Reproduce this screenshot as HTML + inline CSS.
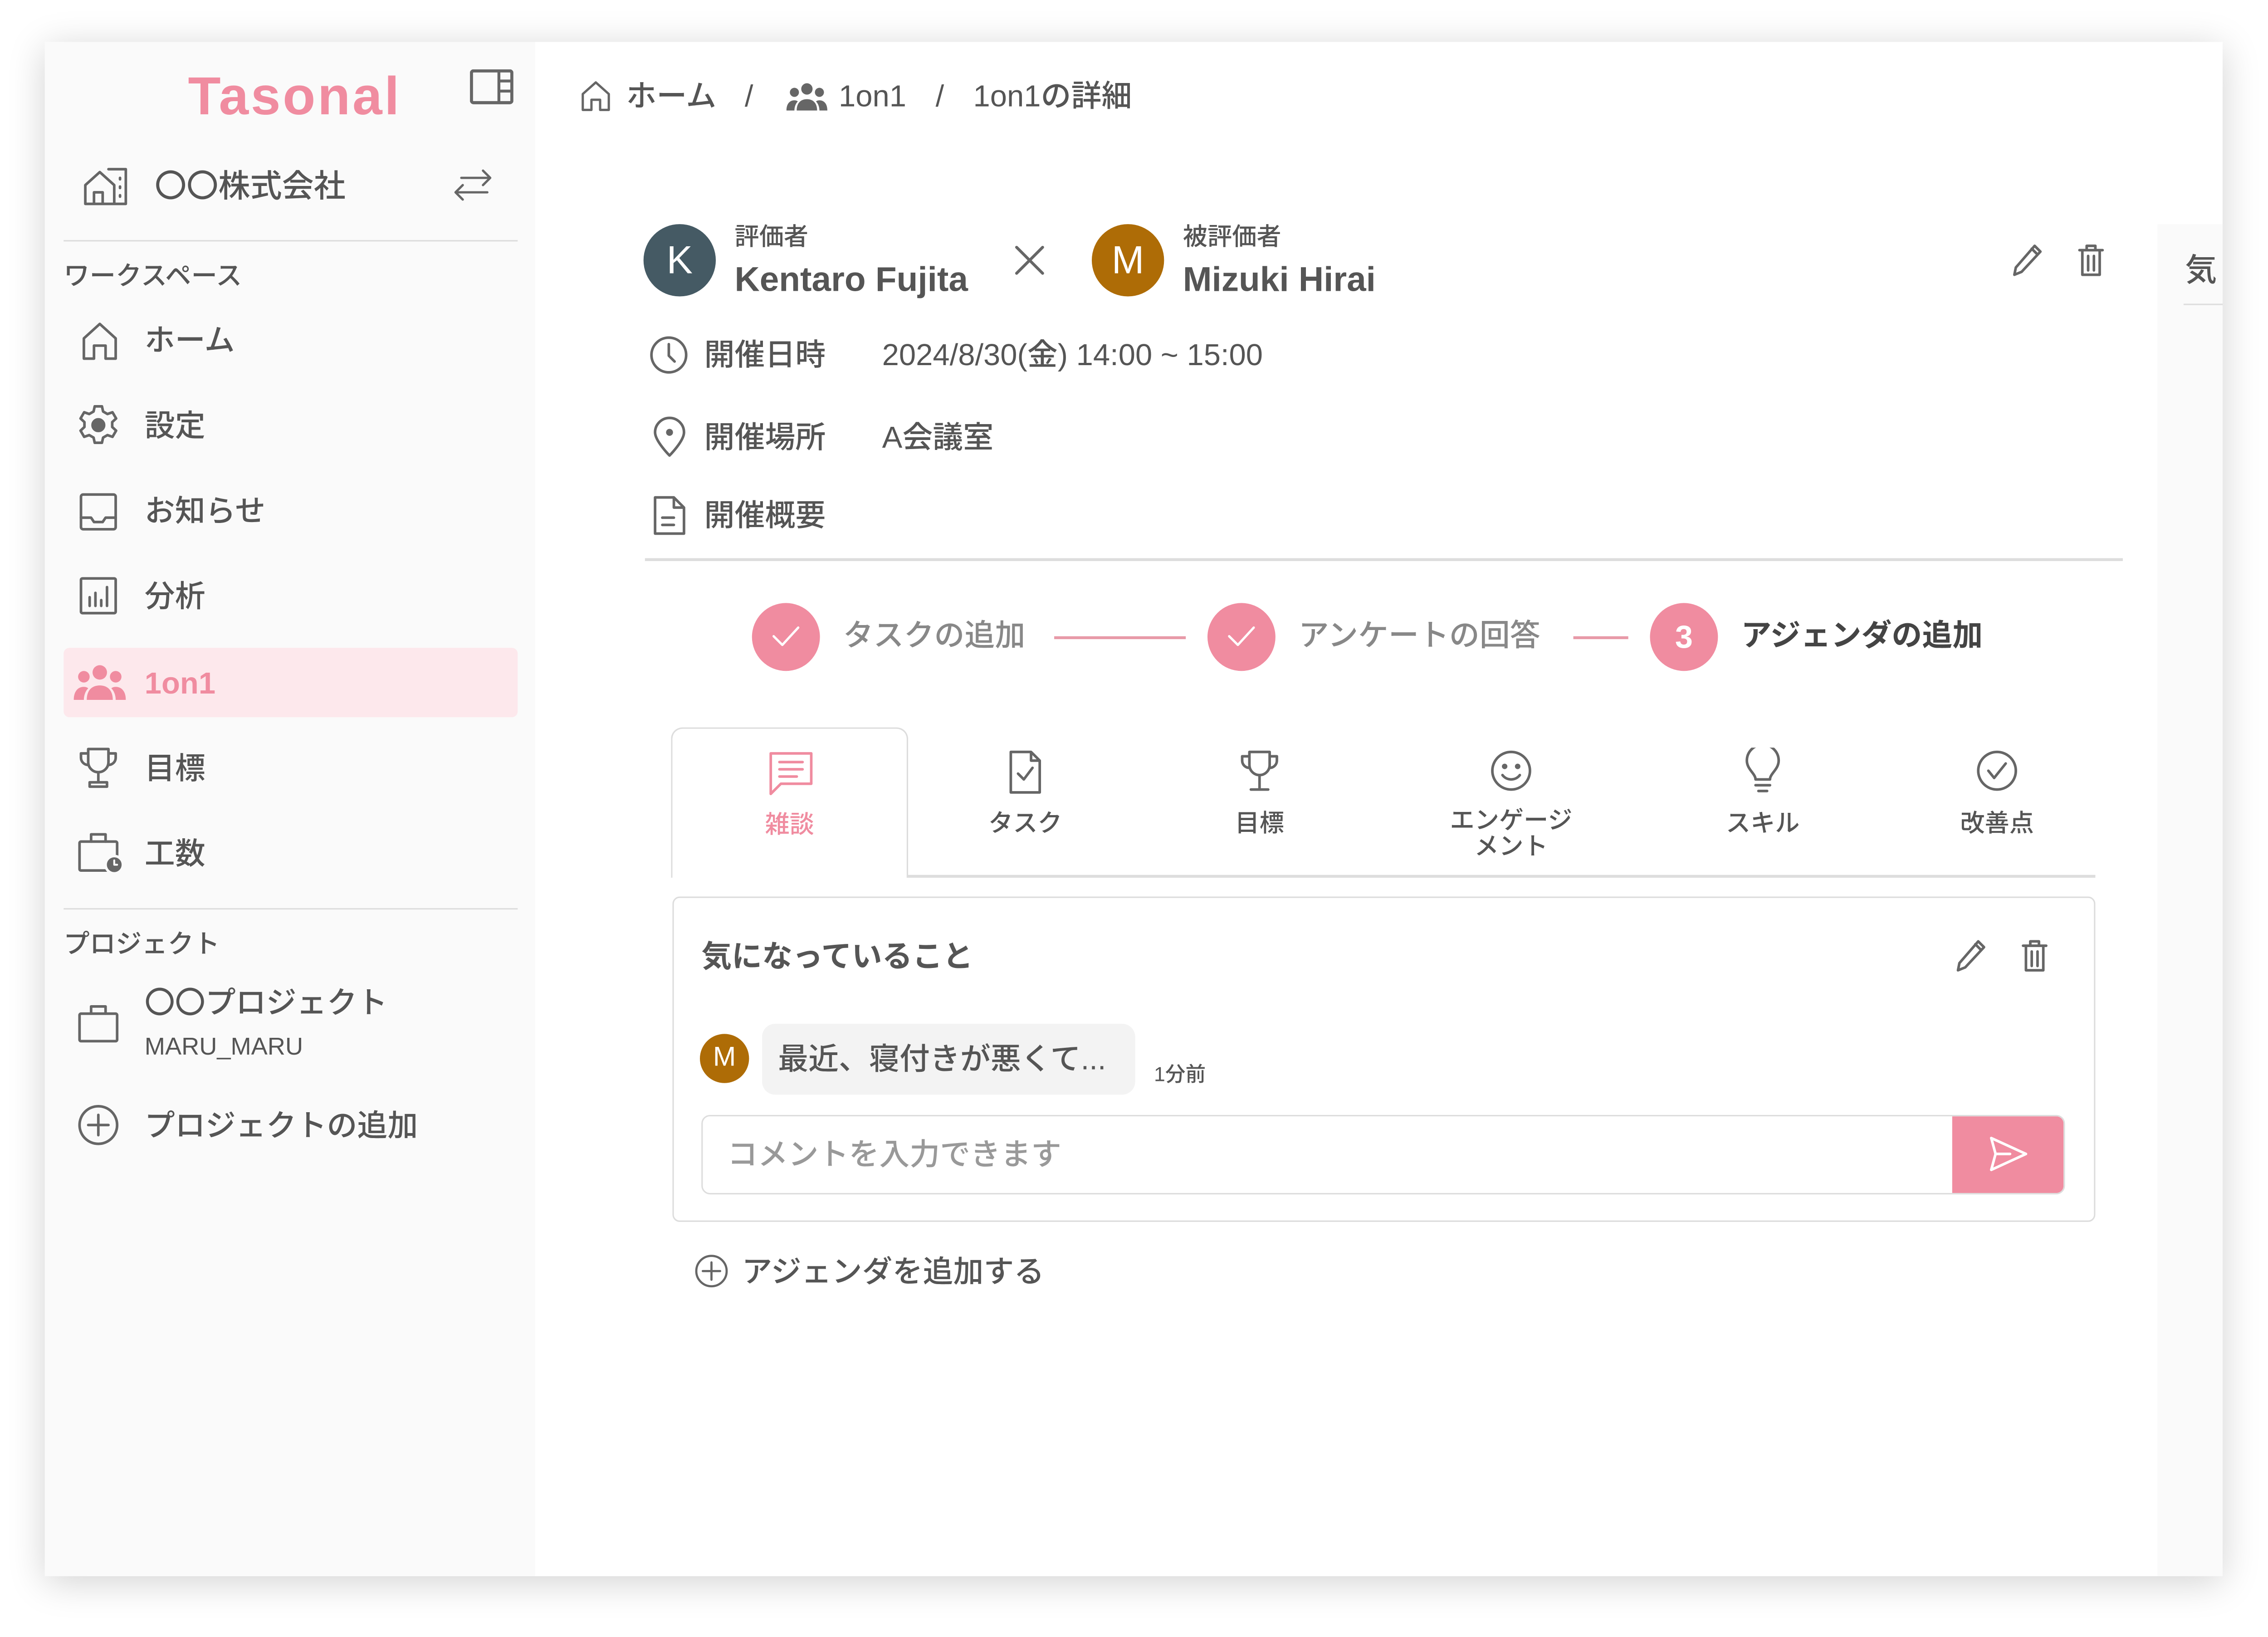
<!DOCTYPE html>
<html><head><meta charset="utf-8"><style>
*{margin:0;padding:0;box-sizing:border-box}
html,body{width:5032px;height:3608px;overflow:hidden;background:#fff}
#s{position:absolute;left:0;top:0;width:1580px;height:1132px;transform:scale(3.188);transform-origin:0 0;font-family:"Liberation Sans","Noto Sans CJK JP",sans-serif;color:#555}
.a{position:absolute;white-space:nowrap}
.win{position:absolute;left:31px;top:29px;width:1506px;height:1061px;background:#fff;box-shadow:0 4px 24px rgba(0,0,0,.18)}
.side{position:absolute;left:31px;top:29px;width:339px;height:1061px;background:#fafafa}
.t{font-size:21px;line-height:1;transform:translateY(-45%);font-weight:500}
svg.i{position:absolute;fill:none;stroke:#666;stroke-width:1.8;stroke-linecap:round;stroke-linejoin:round}
.c{position:absolute;border-radius:50%;color:#fff;text-align:center}
.tl{font-size:17px;transform:translate(-50%,-45%);text-align:center;line-height:1.05;color:#555;font-weight:500}
</style></head><body><div id="s">
<div class="win"></div>
<div class="side"></div>
<div class="a" style="left:1492px;top:155px;width:45px;height:935px;background:#fafafa"></div>
<div class="a t" style="left:1511px;top:186px;font-size:22px">気</div>
<div class="a" style="left:1510px;top:210px;width:27px;height:1px;background:#ddd"></div>

<div class="a" style="left:130px;top:67px;transform:translateY(-50%);font-size:37px;font-weight:bold;color:#f08ca0;letter-spacing:1.5px;font-family:'Liberation Sans',sans-serif">Tasonal</div>
<svg class="i" style="left:325px;top:48px" width="30" height="26" viewBox="0 0 30 26"><rect x="1" y="1" width="28" height="22" rx="1.5" stroke-width="2.2"/><path d="M20 1v22M20 8h9M20 15h9" stroke-width="2"/></svg>

<svg class="i" style="left:57px;top:114px" width="34" height="28" viewBox="0 0 34 28"><path d="M2 27V14l10-9 10 9v13M8 27v-8h6v8M18 3h12v24H2M26 9v1M26 15v1M26 21v1"/></svg>
<div class="a t" style="left:107px;top:128px;font-size:22px;color:#555">〇〇株式会社</div>
<svg class="i" style="left:311px;top:115px" width="32" height="26" viewBox="0 0 32 26"><path d="M4 18h22M4 18l5-5M4 18l5 5M28 8H8M28 8l-5-5M28 8l-5 5" stroke-width="1.6"/></svg>
<div class="a" style="left:44px;top:166px;width:314px;height:1px;background:#ddd"></div>
<div class="a t" style="left:44px;top:190px;font-size:18px">ワークスペース</div>

<svg class="i" style="left:55px;top:222px" width="28" height="28" viewBox="0 0 28 28"><path d="M3 26V12L14 2l11 10v14h-7v-9h-8v9z"/></svg>
<div class="a t" style="left:100px;top:235px">ホーム</div>
<svg class="i" style="left:53px;top:279px" width="30" height="30" viewBox="0 0 30 30"><path d="M12.5 2h5l.8 3.6 3 1.7 3.5-1.2 2.5 4.3-2.7 2.5v3.4l2.7 2.5-2.5 4.3-3.5-1.2-3 1.7-.8 3.6h-5l-.8-3.6-3-1.7-3.5 1.2-2.5-4.3 2.7-2.5v-3.4L2.7 10.4l2.5-4.3 3.5 1.2 3-1.7z"/><circle cx="15" cy="15" r="4" fill="#666"/></svg>
<div class="a t" style="left:100px;top:294px">設定</div>
<svg class="i" style="left:54px;top:340px" width="28" height="28" viewBox="0 0 28 28"><rect x="2" y="2" width="24" height="24" rx="1.5"/><path d="M2 18h7l2 3h6l2-3h7"/></svg>
<div class="a t" style="left:100px;top:353px">お知らせ</div>
<svg class="i" style="left:54px;top:398px" width="28" height="28" viewBox="0 0 28 28"><rect x="2" y="2" width="24" height="24" rx="1"/><path d="M8 21v-6M12 21v-9M16 21v-4M20 21V8"/></svg>
<div class="a t" style="left:100px;top:412px">分析</div>

<div class="a" style="left:44px;top:448px;width:314px;height:48px;background:#fde8ec;border-radius:4px"></div>
<svg class="a" style="left:51px;top:458px" width="36" height="28" viewBox="0 0 36 28" fill="#f08ca0"><circle cx="18" cy="7" r="5"/><circle cx="7" cy="10" r="4"/><circle cx="29" cy="10" r="4"/><path d="M9 26c0-7 4-10 9-10s9 3 9 10zM0 26c0-6 3-9 7-9 2 0 3 1 3 1-2 2-3 5-3 8zM36 26c0-6-3-9-7-9-2 0-3 1-3 1 2 2 3 5 3 8z"/></svg>
<div class="a t" style="left:100px;top:472px;color:#f08ca0;font-weight:bold">1on1</div>

<svg class="i" style="left:54px;top:516px" width="28" height="30" viewBox="0 0 28 30"><path d="M7 2h14v9a7 7 0 0 1-14 0zM7 5H2v3a5 5 0 0 0 5 5M21 5h5v3a5 5 0 0 1-5 5M14 18v7M8 28h12v-3H8z"/></svg>
<div class="a t" style="left:100px;top:531px">目標</div>
<svg class="i" style="left:53px;top:574px" width="34" height="32" viewBox="0 0 34 32"><rect x="2" y="8" width="26" height="20" rx="1"/><path d="M10 8V3h10v5"/><circle cx="26" cy="24" r="6" fill="#666" stroke="#fafafa"/><path d="M26 21v3h2" stroke="#fff" stroke-width="1.3"/></svg>
<div class="a t" style="left:100px;top:590px">工数</div>
<div class="a" style="left:44px;top:628px;width:314px;height:1px;background:#ddd"></div>
<div class="a t" style="left:44px;top:652px;font-size:18px">プロジェクト</div>
<svg class="i" style="left:53px;top:694px" width="30" height="28" viewBox="0 0 30 28"><rect x="2" y="7" width="26" height="19" rx="1"/><path d="M10 7V2h10v5"/></svg>
<div class="a t" style="left:100px;top:693px">〇〇プロジェクト</div>
<div class="a t" style="left:100px;top:723px;font-size:17px">MARU_MARU</div>
<svg class="i" style="left:53px;top:763px" width="30" height="30" viewBox="0 0 30 30"><circle cx="15" cy="15" r="13"/><path d="M15 8v14M8 15h14"/></svg>
<div class="a t" style="left:100px;top:778px">プロジェクトの追加</div>

<svg class="i" style="left:401px;top:55px" width="22" height="22" viewBox="0 0 22 22"><path d="M2 21V10l9-8 9 8v11h-6v-7H8v7z" stroke-width="1.6"/></svg>
<div class="a t" style="left:433px;top:66px">ホーム</div>
<div class="a t" style="left:515px;top:66px">/</div>
<svg class="a" style="left:543px;top:56px" width="30" height="22" viewBox="0 0 36 28" fill="#666"><circle cx="18" cy="7" r="5"/><circle cx="7" cy="10" r="4"/><circle cx="29" cy="10" r="4"/><path d="M9 26c0-7 4-10 9-10s9 3 9 10zM0 26c0-6 3-9 7-9 2 0 3 1 3 1-2 2-3 5-3 8zM36 26c0-6-3-9-7-9-2 0-3 1-3 1 2 2 3 5 3 8z"/></svg>
<div class="a t" style="left:580px;top:66px">1on1</div>
<div class="a t" style="left:647px;top:66px">/</div>
<div class="a t" style="left:673px;top:66px">1on1の詳細</div>

<div class="c" style="left:445px;top:155px;width:50px;height:50px;background:#455a64;font-size:27px;line-height:50px">K</div>
<div class="a t" style="left:508px;top:163px;font-size:17px">評価者</div>
<div class="a t" style="left:508px;top:193px;font-size:24px;font-weight:bold;color:#555">Kentaro Fujita</div>
<svg class="i" style="left:701px;top:169px" width="22" height="22" viewBox="0 0 22 22"><path d="M2 2l18 18M20 2L2 20" stroke-width="2"/></svg>
<div class="c" style="left:755px;top:155px;width:50px;height:50px;background:#ae6c06;font-size:27px;line-height:50px">M</div>
<div class="a t" style="left:818px;top:163px;font-size:17px">被評価者</div>
<div class="a t" style="left:818px;top:193px;font-size:24px;font-weight:bold;color:#555">Mizuki Hirai</div>
<svg class="i" style="left:1391px;top:168px" width="22" height="24" viewBox="0 0 22 24"><path d="M16 2l4 4L7 20l-5 2 1-5zM14 4l4 4"/></svg>
<svg class="i" style="left:1436px;top:168px" width="20" height="24" viewBox="0 0 20 24"><path d="M2 5h16M7 5V2h6v3M4 5v17h12V5M8 9v10M12 9v10"/></svg>

<svg class="i" style="left:449px;top:232px" width="27" height="27" viewBox="0 0 27 27"><circle cx="13.5" cy="13.5" r="12"/><path d="M13.5 6v8l4 4"/></svg>
<div class="a t" style="left:487px;top:245px">開催日時</div>
<div class="a t" style="left:610px;top:245px">2024/8/30(金) 14:00 ~ 15:00</div>
<svg class="i" style="left:451px;top:288px" width="24" height="29" viewBox="0 0 24 29"><path d="M12 27S2 17 2 11a10 10 0 0 1 20 0c0 6-10 16-10 16z"/><circle cx="12" cy="11" r="1.5" fill="#666"/></svg>
<div class="a t" style="left:487px;top:302px">開催場所</div>
<div class="a t" style="left:610px;top:302px">A会議室</div>
<svg class="i" style="left:451px;top:342px" width="24" height="29" viewBox="0 0 24 29"><path d="M2 2h13l7 7v18H2zM15 2v7h7M7 16h8M7 21h8"/></svg>
<div class="a t" style="left:487px;top:356px">開催概要</div>
<div class="a" style="left:446px;top:386px;width:1022px;height:2px;background:#ddd"></div>

<div class="c" style="left:520px;top:417px;width:47px;height:47px;background:#f08ca0"></div>
<svg class="i" style="left:532px;top:430px;stroke:#fff" width="23" height="20" viewBox="0 0 23 20"><path d="M3 10l6 6L20 4" stroke-width="1.6"/></svg>
<div class="a t" style="left:583px;top:439px;color:#888">タスクの追加</div>
<div class="a" style="left:729px;top:440px;width:91px;height:1.5px;background:#e89aa8"></div>
<div class="c" style="left:835px;top:417px;width:47px;height:47px;background:#f08ca0"></div>
<svg class="i" style="left:847px;top:430px;stroke:#fff" width="23" height="20" viewBox="0 0 23 20"><path d="M3 10l6 6L20 4" stroke-width="1.6"/></svg>
<div class="a t" style="left:898px;top:439px;color:#888">アンケートの回答</div>
<div class="a" style="left:1088px;top:440px;width:38px;height:1.5px;background:#e89aa8"></div>
<div class="c" style="left:1141px;top:417px;width:47px;height:47px;background:#f08ca0;font-size:22px;line-height:47px;font-weight:bold">3</div>
<div class="a t" style="left:1204px;top:439px;color:#444;font-weight:bold">アジェンダの追加</div>

<div class="a" style="left:464px;top:503px;width:164px;height:104px;border:1.5px solid #ddd;border-bottom:none;border-radius:8px 8px 0 0;background:#fff"></div>
<div class="a" style="left:627px;top:605px;width:822px;height:1.5px;background:#ddd"></div>
<svg class="i" style="left:531px;top:519px;stroke:#f08ca0" width="32" height="32" viewBox="0 0 32 32"><path d="M2 2h28v21H9l-7 7zM8 8h16M8 13h16M8 18h12"/></svg>
<div class="a tl" style="left:546px;top:570px;color:#f08ca0">雑談</div>
<svg class="i" style="left:697px;top:518px" width="24" height="32" viewBox="0 0 24 32"><path d="M2 2h14l6 6v22H2zM16 2v6h6M7 17l4 4 6-8"/></svg>
<div class="a tl" style="left:709px;top:569px">タスク</div>
<svg class="i" style="left:857px;top:518px" width="28" height="30" viewBox="0 0 28 30"><path d="M7 2h14v9a7 7 0 0 1-14 0zM7 5H2v3a5 5 0 0 0 5 5M21 5h5v3a5 5 0 0 1-5 5M14 18v9M8 28h12"/></svg>
<div class="a tl" style="left:871px;top:569px">目標</div>
<svg class="i" style="left:1030px;top:518px" width="30" height="30" viewBox="0 0 30 30"><circle cx="15" cy="15" r="13"/><circle cx="10.5" cy="12" r="1" fill="#666"/><circle cx="19.5" cy="12" r="1" fill="#666"/><path d="M9 18c3 4 9 4 12 0"/></svg>
<div class="a tl" style="left:1045px;top:575px">エンゲージ<br>メント</div>
<svg class="i" style="left:1206px;top:517px" width="26" height="34" viewBox="0 0 26 34"><path d="M8 22c0-4-6-7-6-13a11 11 0 0 1 22 0c0 6-6 9-6 13zM8 26h10M10 30h6"/></svg>
<div class="a tl" style="left:1219px;top:569px">スキル</div>
<svg class="i" style="left:1366px;top:518px" width="30" height="30" viewBox="0 0 30 30"><circle cx="15" cy="15" r="13"/><path d="M9 15l4 5 8-10"/></svg>
<div class="a tl" style="left:1381px;top:569px">改善点</div>

<div class="a" style="left:465px;top:620px;width:984px;height:225px;border:1.5px solid #ddd;border-radius:5px"></div>
<div class="a t" style="left:485px;top:661px;font-weight:bold;color:#555">気になっていること</div>
<svg class="i" style="left:1352px;top:649px" width="22" height="24" viewBox="0 0 22 24"><path d="M16 2l4 4L7 20l-5 2 1-5zM14 4l4 4"/></svg>
<svg class="i" style="left:1397px;top:649px" width="20" height="24" viewBox="0 0 20 24"><path d="M2 5h16M7 5V2h6v3M4 5v17h12V5M8 9v10M12 9v10"/></svg>
<div class="c" style="left:484px;top:715px;width:34px;height:34px;background:#ae6c06;font-size:19px;line-height:34px">M</div>
<div class="a" style="left:527px;top:708px;width:258px;height:49px;background:#f3f3f3;border-radius:9px"></div>
<div class="a t" style="left:538px;top:732px;color:#555">最近、寝付きが悪くて...</div>
<div class="a t" style="left:798px;top:742px;font-size:14px">1分前</div>
<div class="a" style="left:485px;top:771px;width:943px;height:55px;border:1.5px solid #ddd;border-radius:6px;overflow:hidden"><div style="position:absolute;right:0;top:0;width:77px;height:100%;background:#f08ca0"></div></div>
<svg class="i" style="left:1373px;top:784px;stroke:#fff" width="32" height="28" viewBox="0 0 32 28"><path d="M4 3l24 11L4 25l3-11zM7 14h10" stroke-width="1.8"/></svg>
<div class="a t" style="left:503px;top:798px;color:#999">コメントを入力できます</div>

<svg class="i" style="left:480px;top:867px" width="24" height="24" viewBox="0 0 24 24"><circle cx="12" cy="12" r="10.5" stroke-width="1.5"/><path d="M12 6v12M6 12h12" stroke-width="1.5"/></svg>
<div class="a t" style="left:513px;top:879px">アジェンダを追加する</div>
</div></body></html>
